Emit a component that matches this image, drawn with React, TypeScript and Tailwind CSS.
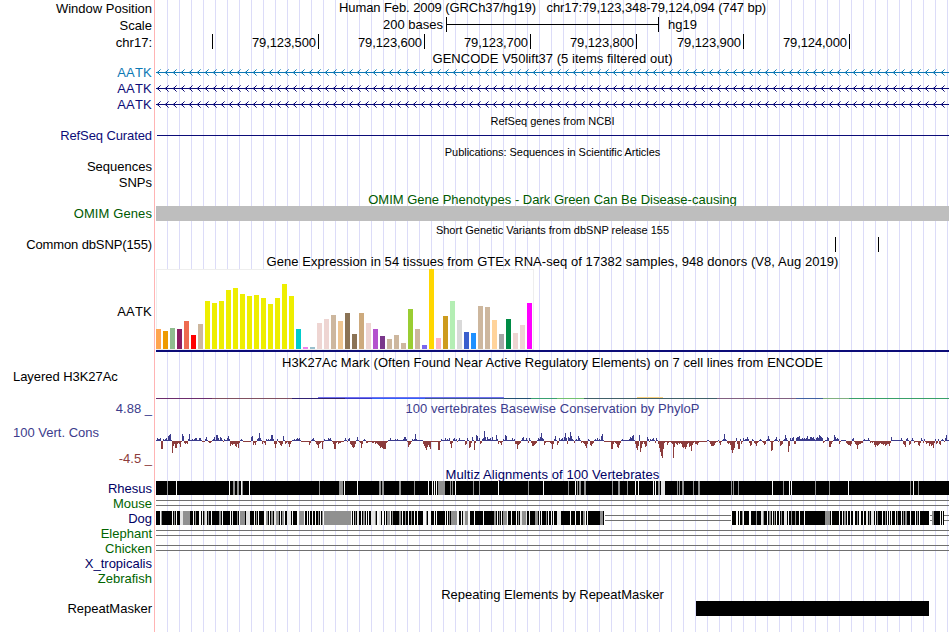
import type { ReactNode } from 'react'

const LEFT = 156
const WIDTH = 793

type Stripe = [x: number, w: number, color: string]

const G = '#909090'
const L = '#e4e4e4'
const W = '#f8f8f8'

const tissues: [number, string][] = [
  [20, '#ffa54f'], [18, '#ee9a00'], [21, '#8fbc8f'], [20, '#8b1c62'], [28, '#ee6a50'], [14, '#ff0000'],
  [25, '#cdb79e'], [48, '#eeee00'], [46, '#eeee00'], [48, '#eeee00'], [59, '#eeee00'], [61, '#eeee00'],
  [55, '#eeee00'], [53, '#eeee00'], [54, '#eeee00'], [51, '#eeee00'], [45, '#eeee00'], [51, '#eeee00'],
  [65, '#eeee00'], [53, '#eeee00'], [20, '#00cdcd'], [2, '#ee82ee'], [2, '#9ac0cd'], [26, '#eed5d2'],
  [30, '#eed5d2'], [34, '#cdb79e'], [28, '#eec591'], [36, '#8b7355'], [15, '#8b7355'], [36, '#cdaa7d'],
  [26, '#eed5d2'], [20, '#b452cd'], [13, '#7a378b'], [10, '#cdb79e'], [14, '#cdb79e'], [6, '#cdb79e'],
  [40, '#9acd32'], [20, '#cdb79e'], [4, '#7a67ee'], [80, '#ffd700'], [11, '#ffb6c1'], [33, '#cd9b1d'],
  [48, '#b4eeb4'], [29, '#d9d9d9'], [17, '#3a5fcd'], [16, '#1e90ff'], [43, '#cdb79e'], [42, '#cdb79e'],
  [29, '#ffd39b'], [15, '#a6a6a6'], [30, '#008b45'], [16, '#eed5d2'], [24, '#eed5d2'], [46, '#ff00ff'],
]

// start position -> heights of the following bases, gaps are flat
const phylop: [number, number[]][] = [
  [156, [1, 3, 2, 2, 3, -8, -8, 2, 1, 2, 3, 1, 5, 6, 7, 1, -12, -5, -3, -7, -7, -3, -2, -3, -6]],
  [181, [-1, 7, 5, -2, -3, -2, -3, 2, 7, 1, 1, 2, 1, 2, 3, 3, 1, 1, 3, 3, 1, -1]],
  [205, [2, 4, 1, -1, -2, -2, -1, 1, 2, 4, 1, 6, 6, 3, 1, 4, 3, 1, -1, 2, 1, 1, 3, 5, 2, -5, -3, -4, -3, -3]],
  [235, [-5, -6, -3, -7, -2, 1, 2, 1, -1]],
  [251, [4, 5, -4, -2, -4, -1, 2, 3, 8, 3, 1, -3, -1, -2, -4, 2, 1, 2, 1, 2, 6, 6, 2, -3, -7, -3, 2, -1, -2, -4, -5, -3, 5, 1, -3, -2]],
  [288, [-3, -6, -3, -1, 1, 1, 2, 1, 2, 3, 2, 3, 1, -1]],
  [309, [-4, -2, 1, 2, 3, 1, -1, -3, -4, -7, -3, -2, -1, -8, -1, 2, 1, 1, 1, 3, 2, 3, 1, -1, -3, -8, -8, -2]],
  [338, [-3, -2, -2, -1, -1, -1, 1, 3, 1, -1, 2, 3, -3, -4, -6, -7, -6, -3, 1, 4, 1, -1, -2, -7, -3, 1, 2, 1, -2, -2, -1]],
  [372, [-2, -2, -1, -3, -2, -3, -4, -5, -7, -6, -7, -8, -8, -8, -2, -1, 1, 1, 3]],
  [395, [2, 1, 2]],
  [402, [1, 2, 4, 4, 2, -1, -6, -4, -3, -1, 2, 1, 2, 7, 2, 1]],
  [423, [-3, -5, -7, -9, -6, -4, -6, -8, -1, -1, -1]],
  [438, [-9, -9, -1, 2, 1, 1, 1, 3, 1, 2, 1, 3, -3, -7, -2, 2, 3, 1, 2, -1, 1, 3, 1]],
  [465, [-4, -3, 3, 1, -7, -6, -2, 4, 1, -9, -2, 6, 5, 1, 3, -3, -2, 2, 3, 10, 4, 1, 4, 2, 2, 3, 1, 4, 1]],
  [496, [6, 2, -3, -1, -2, -4, -1, 2, 1, 6, 5, 1]],
  [512, [3, 1, 2, -3, -3, -8, -4, -3, -2, 1, 3, 4, 1, 1, 3, 1, -2, 3, 1, -2, -5, -5, -4, -3, -2, 1, 3, 2, 4, 8, 3, 2, -4, -2]],
  [550, [-2, -3, -8, -3, 2, 5, 1, -4, -2, 3, 1, 2, 3, 1, 4, 8, 3, -3, 4, 3, 9, 5, 2, 1, -2, 1, 2, 1, 5, 3, 1, -2]],
  [583, [-2, -3, -5, -7, -3, 2, 1, -4, -5, -3, -2, 1, 2, 1, 3, 1, 2, 1, 5, 7, 1, -1]],
  [611, [-8, -8, -3, -1, -2, -3, -6, -7, -4, -2, 1, 2, 1]],
  [628, [1, 2, 4, 3, 5, 6, 1, -3, -7, -9, -5, 6, -11, -7, -3, -1, -3, -6, -5, 4, 2, -1, 2, 1, 2, 3, 1, -2, 3, 1, -3, -7, -11, -15, -17, -8, -2]],
  [667, [-4, -2, -1, -1, -2, -3, -17, -6, -2, -3, -4, -2, -3, -2, -3, -6, -7, -6, -8, -6, -3, -2, -6, -5, -10, -4, -2, -1, -3, -3, -4, -2]],
  [707, [1, 1, -1, -3, -5, -5, -5, -4, -2, -1, -1, 1, -2, -4, -1, 1, 2, 7, 2, 1, -2, -3, -2, -4, -9, -12, -9, -7, -1, 3, -3, -8, -8, 2, -3]],
  [743, [3, 1, 2, 2, 4, 2, -2, -5, -4, 2, 1, -2, -3, -5, -2, -1, 1, 2, 1, -1, -2, -4, -3, 1, 2, 5, 2, -1, -10, -9, -1, 1, 2, 4, 1, -1, 2, -5, -4, -3, 1, 2, 6, 3, 1, -11, -5, 3, 1, 3, 4]],
  [794, [-3, -3, 3, 4, 4, 5, 2, 2, 3, 2, 3, 2, 3, 5, 2, 2, 4, 4, 3, 4, 2, 1, 3, 4, 3, 6, 5, 4, 3, -2, -1, 1, 1, 4, 3, -6, -6, -3, -1, 1, 6, 4, 2, 3, 2, -3]],
  [841, [1, 1, 1, 1, 1, -2, -3, -4, -4, -5, -3, 2, 3, -1, -3, -4, -8, -4, -3, -3, -2, -2, 1, 2, 1]],
  [868, [3, 1, -2, -1, -2, -1, -4, -6, -4, -5, -4, -3, -2, -3, -3, -4, -3, -5, -4, -3, -3, -5, -2, 4, 1]],
  [900, [1, 3, 1, -3, -4, -6, 2, 3, 1, -4, -3, 1, 3, 1, -2, -1]],
  [918, [-4, -5, -2, 3, 1, -2, 2, -1, -3, -2, -2, -5, -3, -5, -4, -7, -2, 2, -3, -2, 2, -3, -4, 1, 2, 1, -1, 3, 6]],
]

const rhesus: Stripe[] = [
  [167, 1, G], [176, 1, W], [229, 1, W], [233, 2, G], [237, 2, G], [241, 1, W], [242, 1, G], [249, 1, W],
  [319, 1, G], [339, 4, G], [344, 1, W], [357, 1, W], [379, 2, G], [382, 2, G], [399, 2, G], [414, 1, G],
  [428, 1, W], [432, 1, W], [434, 1, W], [436, 1, W], [438, 7, G], [450, 1, G], [452, 1, G], [455, 1, W],
  [473, 1, G], [479, 1, G], [498, 1, W], [528, 1, G], [543, 1, W], [568, 1, G], [575, 1, W], [577, 1, G],
  [579, 2, G], [584, 2, G], [612, 1, G], [618, 2, G], [627, 1, G], [635, 1, W], [638, 1, W], [653, 1, W],
  [655, 1, W], [658, 2, G], [661, 4, L], [677, 1, G], [679, 1, G], [682, 2, G], [693, 1, G], [698, 2, G],
  [731, 1, G], [733, 1, G], [738, 1, G], [772, 1, W], [783, 1, G], [789, 1, W], [791, 1, W], [815, 1, G],
  [829, 1, G], [848, 1, W], [910, 1, G], [913, 1, W], [918, 1, G],
]

const dog: Stripe[] = [
  [160, 1, W], [161, 1, G], [172, 1, W], [174, 1, G], [176, 1, W], [180, 3, L], [183, 7, G], [193, 1, W],
  [195, 1, G], [199, 2, W], [202, 1, W], [204, 1, G], [205, 2, L], [208, 1, G], [211, 1, W], [219, 2, G],
  [222, 1, W], [230, 1, W], [232, 1, L], [237, 1, G], [239, 1, W], [240, 5, G], [246, 4, L], [254, 1, W],
  [256, 1, G], [258, 1, W], [264, 2, W], [266, 2, G], [269, 1, W], [271, 2, G], [274, 2, L], [276, 3, G],
  [280, 1, W], [282, 2, G], [284, 1, W], [287, 4, L], [292, 1, W], [297, 2, W], [299, 5, G], [304, 1, W],
  [307, 1, W], [309, 1, W], [312, 1, W], [315, 1, W], [318, 1, G], [320, 1, W], [322, 1, G], [323, 1, W],
  [324, 27, G], [351, 1, W], [353, 1, W], [355, 1, G], [357, 2, L], [361, 1, W], [363, 2, G], [366, 1, W],
  [368, 1, W], [371, 4, L], [375, 1, G], [377, 2, W], [379, 2, L], [382, 2, W], [385, 1, W], [387, 3, G],
  [390, 1, W], [392, 1, G], [399, 2, G], [402, 1, W], [405, 1, G], [408, 1, W], [411, 1, G], [414, 1, W],
  [417, 1, W], [423, 3, W], [426, 1, G], [428, 3, W], [434, 1, W], [436, 1, W], [445, 1, W], [447, 1, W],
  [449, 1, G], [451, 6, G], [457, 2, W], [461, 1, W], [463, 2, L], [465, 3, G], [468, 2, W], [474, 1, W],
  [483, 1, W], [494, 2, G], [497, 1, W], [499, 1, G], [501, 1, W], [503, 4, G], [507, 1, W], [511, 1, W],
  [516, 1, W], [518, 1, G], [520, 2, L], [522, 4, G], [526, 1, L], [529, 1, W], [535, 3, G], [539, 1, W],
  [541, 1, W], [546, 1, G], [548, 1, W], [551, 1, W], [553, 1, W], [557, 4, L], [570, 1, W], [575, 1, W],
  [580, 1, W], [583, 2, G], [585, 1, W], [587, 1, W], [600, 3, G],
  [736, 2, W], [739, 1, W], [742, 1, G], [743, 1, W], [749, 2, W], [756, 1, G], [761, 2, L], [763, 1, G],
  [767, 1, W], [769, 2, G], [772, 1, W], [774, 1, G], [776, 1, W], [779, 1, W], [781, 1, G], [784, 3, L],
  [788, 1, W], [791, 1, G], [795, 1, G], [799, 1, W], [804, 1, W], [825, 5, G], [831, 1, W], [839, 1, W],
  [842, 1, W], [844, 2, G], [847, 1, W], [850, 1, W], [853, 2, W], [857, 1, G], [859, 2, W], [863, 1, W],
  [866, 2, L], [869, 1, G], [871, 3, L], [875, 1, W], [877, 1, G], [882, 1, W], [885, 1, G], [887, 1, W],
  [889, 1, W], [891, 1, W], [895, 1, W], [897, 1, G], [901, 1, W], [903, 1, G], [905, 2, G], [910, 1, W],
  [915, 1, W], [917, 1, G], [919, 1, W], [932, 2, G], [940, 1, W], [942, 1, W],
]

const h3k27ac: [number, number, string][] = [
  [156, 212, '#6c2c6c'], [212, 292, '#805060'], [292, 345, '#302070'], [345, 372, '#3838c8'],
  [372, 425, '#3060f8'], [425, 504, '#3a5a90'], [504, 531, '#205070'], [531, 557, '#38a070'],
  [557, 584, '#70c070'], [584, 717, '#406068'], [717, 796, '#806080'], [796, 823, '#4060a0'],
  [823, 849, '#80b080'], [849, 949, '#38a068'],
]

const ticks: [number, string][] = [
  [212, ''], [318, '79,123,500'], [424, '79,123,600'], [530, '79,123,700'],
  [636, '79,123,800'], [743, '79,123,900'], [849, '79,124,000'],
]

interface RowProps {
  h: string
  label?: ReactNode
  labelClass?: string
  children?: ReactNode
}

function Row({ h, label, labelClass = '', children }: RowProps) {
  return (
    <div className={`flex shrink-0 ${h}`}>
      <div className={`flex w-[156px] shrink-0 items-center justify-end whitespace-nowrap pr-1 ${labelClass}`}>{label}</div>
      <div className="flex min-w-0 flex-1 items-center justify-center whitespace-pre">{children}</div>
    </div>
  )
}

function Track({ h, children }: { h: number; children: ReactNode }) {
  return (
    <svg width={WIDTH} height={h} viewBox={`${LEFT} 0 ${WIDTH} ${h}`} shapeRendering="crispEdges" className="block shrink-0 self-start">
      {children}
    </svg>
  )
}

function GeneLine({ color }: { color: string }) {
  return (
    <Track h={16}>
      <rect x={LEFT} y={7} width={WIDTH} height={1} fill={color} />
      {Array.from({ length: 99 }, (_, i) => (
        <g key={i} fill={color} transform={`translate(${157 + i * 8} 0)`}>
          <path d="M0 6h1v3h-1z" opacity={0.25} />
          <path d="M1 6h1v3h-1zM2 5h1v1h-1zM2 9h1v1h-1z" />
          <path d="M3 4h1v1h-1zM3 10h1v1h-1z" opacity={0.6} />
        </g>
      ))}
    </Track>
  )
}

function Stripes({ items }: { items: Stripe[] }) {
  return items.map(([x, w, color]) => <rect key={x} x={x} y={0} width={w} height={14} fill={color} />)
}

function DoubleLine() {
  return (
    <>
      <rect x={LEFT} y={4} width={WIDTH} height={1} fill="#707070" />
      <rect x={LEFT} y={9} width={WIDTH} height={1} fill="#707070" />
    </>
  )
}

function Conservation() {
  const values: number[] = new Array(WIDTH).fill(0)
  phylop.forEach(([start, heights]) => heights.forEach((v, i) => { values[start - LEFT + i] = v }))
  for (let i = 1; i < WIDTH; i++) {
    if (!values[i]) values[i] = values[i - 1] > 0 ? 1 : -1
  }
  return values.slice(0, WIDTH).map((v, i) => (
    <rect key={i} x={LEFT + i} y={v > 0 ? 24 - v : 24} width={1} height={Math.abs(v)} fill={v > 0 ? '#3c3c8c' : '#8c3c3c'} />
  ))
}

export default function App() {
  return (
    <div className="flex h-[632px] w-[949px] flex-col overflow-hidden bg-white bg-[linear-gradient(90deg,transparent_154px,#ffb4b4_154px,#ffb4b4_155px,transparent_155px),repeating-linear-gradient(90deg,transparent_0px,transparent_11px,#dcdcf8_11px,#dcdcf8_12px)] bg-[position:0px_0px,156px_0px] bg-no-repeat font-['Liberation_Sans',Arial,sans-serif] text-[13px] leading-none text-black">
      <Row h="h-[17px]" label="Window Position">
        <span className="pb-[2px] tracking-[-0.086px]">Human Feb. 2009 (GRCh37/hg19)   chr17:79,123,348-79,124,094 (747 bp)</span>
      </Row>
      <Row h="h-[17px]" label="Scale" labelClass="pb-px">
        <div className="flex h-full w-full items-start">
          <span className="w-[287px] pt-px text-right">200 bases</span>
          <svg width="213" height="15" className="ml-[3px]" shapeRendering="crispEdges">
            <path d="M0.5 0v15M212.5 0v15M0 7.5h213" stroke="#000" fill="none" />
          </svg>
          <span className="ml-[9px] pt-px">hg19</span>
        </div>
      </Row>
      <Row h="h-[17px]" label="chr17:">
        <Track h={17}>
          {ticks.map(([x, text]) => (
            <g key={x}>
              <rect x={x} y={0} width={1} height={15} />
              <text x={x - 66} y={13} textLength={64}>{text}</text>
            </g>
          ))}
        </Track>
      </Row>
      <Row h="h-[14px]">
        <span className="tracking-[0.04px]">GENCODE V50lift37 (5 items filtered out)</span>
      </Row>
      <Row h="h-4" label="AATK" labelClass="pb-[2px] [font-kerning:none] tracking-[0.2px] text-[#0c78b4]"><GeneLine color="#0c78b4" /></Row>
      <Row h="h-4" label="AATK" labelClass="pb-[2px] [font-kerning:none] tracking-[0.2px] text-[#0c0c78]"><GeneLine color="#0c0c78" /></Row>
      <Row h="h-4" label="AATK" labelClass="pb-[2px] [font-kerning:none] tracking-[0.2px] text-[#0c0c78]"><GeneLine color="#0c0c78" /></Row>
      <Row h="h-4">
        <span className="text-[11px]">RefSeq genes from NCBI</span>
      </Row>
      <Row h="h-[15px]" label="RefSeq Curated" labelClass="pb-[2px] tracking-[-0.1px] text-[#0c0c78]">
        <Track h={15}><rect x={157} y={6} width={792} height={1} fill="#0c0c78" /></Track>
      </Row>
      <Row h="h-4">
        <span className="text-[11px] tracking-[-0.05px]">Publications: Sequences in Scientific Articles</span>
      </Row>
      <Row h="h-[15px]" label="Sequences" labelClass="pb-[2px]" />
      <Row h="h-4" label="SNPs" labelClass="pb-[2px]" />
      <Row h="h-[15px]">
        <span className="pt-[2px] text-[#005a00]">OMIM Gene Phenotypes - Dark Green Can Be Disease-causing</span>
      </Row>
      <Row h="h-[15px]" label="OMIM Genes" labelClass="tracking-[0.1px] text-[#005a00]">
        <div className="z-10 h-full w-full bg-[#bebebe]" />
      </Row>
      <Row h="h-4">
        <span className="pt-[2px] text-[11px]">Short Genetic Variants from dbSNP release 155</span>
      </Row>
      <Row h="h-4" label="Common dbSNP(155)" labelClass="pb-[2px] tracking-[-0.12px]">
        <Track h={16}>
          <rect x={835} y={0} width={1} height={15} />
          <rect x={878} y={0} width={1} height={15} />
        </Track>
      </Row>
      <Row h="h-4">
        <span className="tracking-[0.05px]">Gene Expression in 54 tissues from GTEx RNA-seq of 17382 samples, 948 donors (V8, Aug 2019)</span>
      </Row>
      <Row h="h-[84px]" label="AATK" labelClass="[font-kerning:none] tracking-[0.2px]">
        <Track h={84}>
          <rect x={156} y={0} width={378} height={81} fill="#eeeeee" />
          <rect x={157} y={1} width={376} height={79} fill="#fff" />
          {tissues.map(([height, color], i) => (
            <rect key={i} x={LEFT + i * 7} y={80 - height} width={5} height={height} fill={color} />
          ))}
          <rect x={LEFT} y={81} width={WIDTH} height={2} fill="#0c0c78" />
        </Track>
      </Row>
      <Row h="h-[18px]">
        <span className="tracking-[0.04px]">H3K27Ac Mark (Often Found Near Active Regulatory Elements) on 7 cell lines from ENCODE</span>
      </Row>
      <Row
        h="h-[29px]"
        labelClass="justify-start! pb-[18px] pl-[13px] tracking-[-0.05px]"
        label="Layered H3K27Ac"
      >
        <Track h={29}>
          {h3k27ac.map(([from, to, color]) => (
            <rect key={from} x={from} y={27} width={to - from} height={1} fill={color} />
          ))}
          <rect x={318} y={26} width={186} height={1} fill="#7070f0" />
          <rect x={637} y={26} width={26} height={1} fill="#f8d080" />
        </Track>
      </Row>
      <Row h="h-[17px]" label="4.88 _" labelClass="text-[#3c3c8c]">
        <span className="tracking-[0.04px] text-[#3c3c8c]">100 vertebrates Basewise Conservation by PhyloP</span>
      </Row>
      <Row
        h="h-[50px]"
        labelClass="items-stretch!"
        label={
          <div className="flex w-full flex-col justify-between pt-[9px]">
            <span className="pl-[13px] text-[#3c3c8c]">100 Vert. Cons</span>
            <span className="pb-[2px] text-right text-[#8c3c3c]">-4.5 _</span>
          </div>
        }
      >
        <Track h={50}><Conservation /></Track>
      </Row>
      <Row h="h-[14px]">
        <span className="tracking-[0.08px] text-[#000064]">Multiz Alignments of 100 Vertebrates</span>
      </Row>
      <Row h="h-[15px]" label="Rhesus" labelClass="text-[#000064]">
        <Track h={15}>
          <rect x={LEFT} y={0} width={WIDTH} height={14} />
          <Stripes items={rhesus} />
        </Track>
      </Row>
      <Row h="h-[15px]" label="Mouse" labelClass="text-[#006400]"><Track h={15}><DoubleLine /></Track></Row>
      <Row h="h-[15px]" label="Dog" labelClass="text-[#000064]">
        <Track h={15}>
          <DoubleLine />
          <rect x={603} y={0} width={2} height={14} fill="#fff" />
          <rect x={731} y={0} width={1} height={14} fill="#fff" />
          <rect x={929} y={0} width={1} height={14} fill="#fff" />
          <rect x={156} y={0} width={448} height={14} />
          <rect x={732} y={0} width={197} height={14} />
          <rect x={932} y={0} width={12} height={14} />
          <Stripes items={dog} />
        </Track>
      </Row>
      <Row h="h-[15px]" label="Elephant" labelClass="text-[#006400]"><Track h={15}><DoubleLine /></Track></Row>
      <Row h="h-[15px]" label="Chicken" labelClass="text-[#006400]"><Track h={15}><DoubleLine /></Track></Row>
      <Row h="h-[15px]" label="X_tropicalis" labelClass="text-[#000064]" />
      <Row h="h-[15px]" label="Zebrafish" labelClass="text-[#006400]" />
      <Row h="h-[15px]">
        <span className="pt-[2px]">Repeating Elements by RepeatMasker</span>
      </Row>
      <Row h="h-[15px]" label="RepeatMasker">
        <Track h={15}><rect x={696} y={0} width={233} height={15} /></Track>
      </Row>
    </div>
  )
}
